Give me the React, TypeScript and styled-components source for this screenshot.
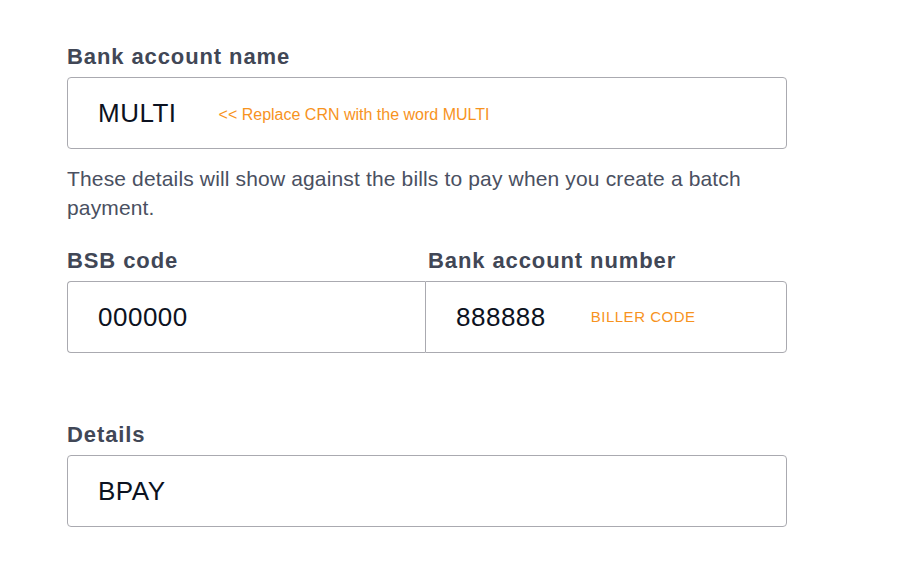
import React from 'react';
import styled, { createGlobalStyle } from 'styled-components';

const Global = createGlobalStyle`
  body {
    margin: 0;
    background: #ffffff;
    font-family: "Liberation Sans", Arial, Helvetica, sans-serif;
  }
`;

const Page = styled.div`
  width: 720px;
  padding: 43px 0 0 67px;
`;

const Label = styled.div<{ $indent?: number }>`
  font-size: 22px;
  line-height: 28px;
  font-weight: 700;
  letter-spacing: 0.9px;
  color: #414756;
  margin-bottom: 6px;
  padding-left: ${({ $indent }) => $indent ?? 0}px;
`;

const Box = styled.div<{ $side?: 'left' | 'right' }>`
  box-sizing: border-box;
  height: 72px;
  display: flex;
  align-items: center;
  padding-left: 30px;
  border: 1px solid #aaaab0;
  border-radius: ${({ $side }) =>
    $side === 'left' ? '4px 0 0 4px' : $side === 'right' ? '0 4px 4px 0' : '4px'};
  ${({ $side }) => ($side === 'left' ? 'border-right: none;' : '')}
`;

const Value = styled.span`
  font-size: 26px;
  color: #0c1221;
  letter-spacing: 0.5px;
`;

const Note = styled.span<{ $caps?: boolean }>`
  font-size: ${({ $caps }) => ($caps ? 15 : 16)}px;
  letter-spacing: ${({ $caps }) => ($caps ? 0.5 : 0)}px;
  color: #f7931e;
  margin-left: ${({ $caps }) => ($caps ? 45 : 42)}px;
  margin-top: ${({ $caps }) => ($caps ? -2 : 3)}px;
`;

const Help = styled.p`
  margin: 15px 0 0;
  font-size: 21px;
  line-height: 29px;
  letter-spacing: 0.15px;
  color: #4a5061;
`;

const Row = styled.div`
  display: grid;
  grid-template-columns: 358px 362px;
  margin-top: 25px;
`;

const Field = styled.div<{ $gap?: number }>`
  margin-top: ${({ $gap }) => $gap ?? 0}px;
`;

export default function App() {
  return (
    <>
      <Global />
      <Page>
        <Field>
          <Label>Bank account name</Label>
          <Box>
            <Value>MULTI</Value>
            <Note>&lt;&lt; Replace CRN with the word MULTI</Note>
          </Box>
        </Field>
        <Help>
          These details will show against the bills to pay when you create a batch payment.
        </Help>
        <Row>
          <Field>
            <Label>BSB code</Label>
            <Box $side="left">
              <Value>000000</Value>
            </Box>
          </Field>
          <Field>
            <Label $indent={3}>Bank account number</Label>
            <Box $side="right">
              <Value>888888</Value>
              <Note $caps>BILLER CODE</Note>
            </Box>
          </Field>
        </Row>
        <Field $gap={68}>
          <Label>Details</Label>
          <Box>
            <Value>BPAY</Value>
          </Box>
        </Field>
      </Page>
    </>
  );
}
